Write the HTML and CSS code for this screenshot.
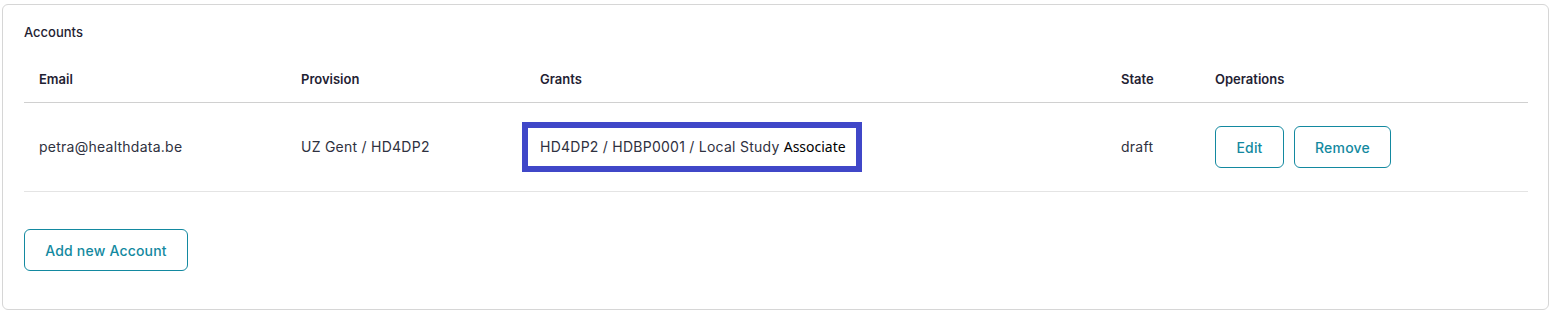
FILE: index.html
```html
<!DOCTYPE html>
<html lang="en">
<head>
    <meta charset="UTF-8">
    <meta name="viewport" content="width=device-width, initial-scale=1.0">
    <title>Accounts</title>
    <link rel="stylesheet" href="styles.css">
</head>
<body>
    <div class="card">
        <div class="card-title">Accounts</div>

        <!-- Accounts table -->
        <div class="accounts-table">
            <div class="cell head">Email</div>
            <div class="cell head">Provision</div>
            <div class="cell head">Grants</div>
            <div class="cell head">State</div>
            <div class="cell head">Operations</div>

            <div class="cell">petra@healthdata.be</div>
            <div class="cell">UZ Gent / HD4DP2</div>
            <div class="cell">
                <span class="grant-box">HD4DP2 / HDBP0001 / Local Study <span class="grant-role">Associate</span></span>
            </div>
            <div class="cell">draft</div>
            <div class="cell action-buttons">
                <button class="btn btn-edit">Edit</button>
                <button class="btn btn-remove">Remove</button>
            </div>
        </div>

        <button class="btn btn-add">Add new Account</button>
    </div>
</body>
</html>
```

FILE: styles.css
```css
body {
    margin: 0;
    padding: 4px 8px 0 2px;
    font-family: Inter, "Liberation Sans", sans-serif;
    color: #2f3140;
    background-color: #fff;
}

.card {
    border: 1px solid #d6d6d6;
    border-radius: 6px;
    padding: 17px 20px 38px 21px;
    height: 306px;
    box-sizing: border-box;
}

.card-title {
    font-size: 13px;
    font-weight: 500;
    line-height: 20px;
    color: #1f2233;
    margin-bottom: 13px;
}

.accounts-table {
    display: grid;
    grid-template-columns: 262px 239px 581px 94px 1fr;
    margin-bottom: 37px;
}

.cell {
    display: flex;
    align-items: center;
    padding: 0 15px;
    height: 88px;
    font-size: 14px;
    line-height: 20px;
    letter-spacing: 0.25px;
    border-bottom: 1px solid #e4e4e4;
}

.cell.head {
    height: 47px;
    font-size: 13px;
    font-weight: 600;
    letter-spacing: 0;
    color: #1f2233;
    border-bottom: 1px solid #d0d0d0;
}

.grant-box {
    display: inline-block;
    margin-left: -18px;
    padding: 9px 10px 9px 12px;
    border: 6px solid #4047c8;
}

.grant-role {
    font-family: "Noto Sans", "Open Sans", sans-serif;
    letter-spacing: 0;
    color: #000;
}

.action-buttons {
    gap: 10px;
}

.btn {
    font-family: Inter, "Liberation Sans", sans-serif;
    font-size: 14px;
    font-weight: 500;
    letter-spacing: 0.2px;
    color: #1389a0;
    background: #fff;
    border: 1px solid #1389a0;
    border-radius: 6px;
    height: 42px;
    padding: 0;
    cursor: pointer;
}

.btn-edit {
    width: 69px;
}

.btn-remove {
    width: 97px;
}

.btn-add {
    width: 164px;
}
```
